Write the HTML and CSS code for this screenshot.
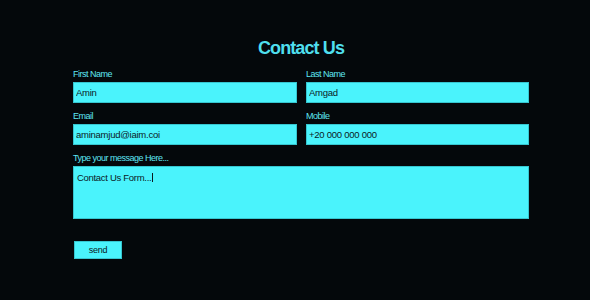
FILE: index.html
```html
<!DOCTYPE html>
<html>
<head>
<meta charset="utf-8">
<link rel="stylesheet" href="styles.css">
</head>
<body>
<div class="page">
  <h1 class="title">Contact Us</h1>
  <form class="form">
    <div class="row">
      <div class="field">
        <label class="label">First Name</label>
        <input class="input" type="text" value="Amin">
      </div>
      <div class="field">
        <label class="label">Last Name</label>
        <input class="input" type="text" value="Amgad">
      </div>
    </div>
    <div class="row">
      <div class="field">
        <label class="label">Email</label>
        <input class="input" type="text" value="aminamjud@iaim.coi">
      </div>
      <div class="field">
        <label class="label">Mobile</label>
        <input class="input" type="text" value="+20 000 000 000">
      </div>
    </div>
    <div class="field">
      <label class="label">Type your message Here...</label>
      <div class="message">Contact Us Form...<span class="caret"></span></div>
    </div>
    <button class="send" type="button">send</button>
  </form>
</div>
</body>
</html>
```
FILE: styles.css
```css
html, body {
  margin: 0;
  padding: 0;
  background: #04080b;
}
body {
  font-family: "Liberation Sans", Arial, sans-serif;
  width: 590px;
  height: 300px;
  overflow: hidden;
}
.page {
  padding-top: 38px;
  padding-left: 73px;
  width: 456px;
}
.title {
  margin: 0;
  text-align: center;
  font-size: 18px;
  font-weight: bold;
  letter-spacing: -0.9px;
  color: #4fdfee;
  line-height: 21px;
  height: 30px;
}
.form {
  display: flex;
  flex-direction: column;
  align-items: stretch;
}
.row {
  display: grid;
  grid-template-columns: 224px 223px;
  column-gap: 9px;
  margin-bottom: 7px;
}
.field {
  display: flex;
  flex-direction: column;
}
.label {
  font-size: 9px;
  line-height: 12px;
  letter-spacing: -0.5px;
  color: #5ee6f2;
  margin-bottom: 2px;
}
.input {
  box-sizing: border-box;
  height: 21px;
  margin: 0;
  border: 1px solid #36c6d0;
  background: #4af3fc;
  color: #0b1a1f;
  font-family: "Liberation Sans", Arial, sans-serif;
  font-size: 9.5px;
  letter-spacing: -0.25px;
  padding: 0 0 0 2px;
  outline: none;
}
.message {
  box-sizing: border-box;
  height: 53px;
  border: 1px solid #36c6d0;
  background: #4af3fc;
  color: #0b1a1f;
  font-size: 9.5px;
  letter-spacing: -0.3px;
  line-height: 11px;
  padding: 5px 0 0 3px;
}
.caret {
  display: inline-block;
  width: 1px;
  height: 9px;
  background: #0b1a1f;
  vertical-align: -1px;
  margin-left: 1px;
}
.send {
  align-self: flex-start;
  margin: 22px 0 0 1px;
  box-sizing: border-box;
  width: 48px;
  height: 18px;
  padding: 0;
  border: 1px solid #36c6d0;
  background: #4af3fc;
  color: #0b1a1f;
  font-family: "Liberation Sans", Arial, sans-serif;
  font-size: 9px;
  letter-spacing: -0.3px;
  cursor: pointer;
}
```
